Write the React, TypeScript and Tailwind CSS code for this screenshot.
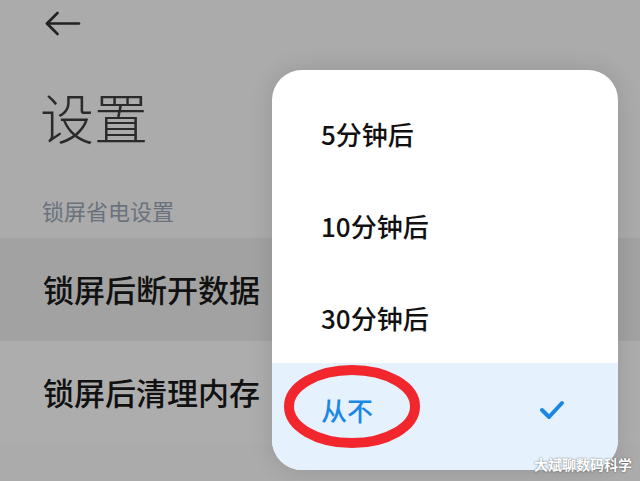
const cjk = { fontFamily: '"Noto Sans CJK SC", "Noto Sans", sans-serif' };

export default function App() {
  return (
    <div className="relative w-[640px] h-[481px] overflow-hidden bg-[#ababab]" style={cjk}>
      {/* 页面本体 */}
      <div className="flex flex-col">
        <div className="pl-[45px] pt-[11px] h-[60px]">
          <svg width="36" height="26" viewBox="0 0 36 26" fill="none" stroke="#222" strokeWidth="2.6" strokeLinecap="round" strokeLinejoin="round">
            <path d="M2 12.5H34" />
            <path d="M12.5 2L2 12.5L12.5 23" />
          </svg>
        </div>
        <h1 className="pl-[40px] mt-[27px] text-[54px] leading-[60px] font-light text-[#2a2a2a]">设置</h1>
        <div className="pl-[42px] mt-[48px] text-[22px] leading-[30px] text-[#6a727c]">锁屏省电设置</div>
        <div className="mt-[13px] h-[103px] bg-[#a2a2a2] flex items-center pl-[43px] text-[31px] font-medium text-[#111]">
          锁屏后断开数据
        </div>
        <div className="h-[103px] bg-[#adadad] flex items-center pl-[43px] text-[31px] font-medium text-[#111]">
          锁屏后清理内存
        </div>
      </div>

      {/* 弹出菜单 */}
      <div className="absolute left-[272px] top-[70px] w-[346px] h-[400px] rounded-[30px] bg-white overflow-hidden shadow-[0_0_24px_rgba(0,0,0,0.12)] flex flex-col pt-[17px]">
        <MenuItem label="5分钟后" />
        <MenuItem label="10分钟后" />
        <MenuItem label="30分钟后" />
        <div className="flex-1 bg-[#e5f1fc] flex items-center justify-between pl-[49px] pr-[52px] pb-[14px]">
          <span className="text-[26px] font-medium text-[#1a87e6]">从不</span>
          <svg width="28" height="24" viewBox="0 0 28 24" fill="none" stroke="#1a87e6" strokeWidth="4" strokeLinecap="round" strokeLinejoin="round">
            <path d="M4 12L11 19L24 5" />
          </svg>
        </div>
      </div>

      {/* 红圈标注 */}
      <svg className="absolute left-[283px] top-[365px]" width="138" height="83" viewBox="0 0 138 83">
        <ellipse cx="69" cy="41.5" rx="63" ry="36.5" fill="none" stroke="#f2262d" strokeWidth="10" />
      </svg>

      {/* 水印 */}
      <div className="absolute left-[534px] top-[454px] text-[14px] leading-[20px] font-bold text-white [text-shadow:0_0_2px_rgba(0,0,0,0.6)]">
        大斌聊数码科学
      </div>
    </div>
  );
}

function MenuItem({ label }: { label: string }) {
  return (
    <div className="h-[92px] flex items-center pl-[49px] text-[26px] font-medium text-[#111]">
      {label}
    </div>
  );
}
